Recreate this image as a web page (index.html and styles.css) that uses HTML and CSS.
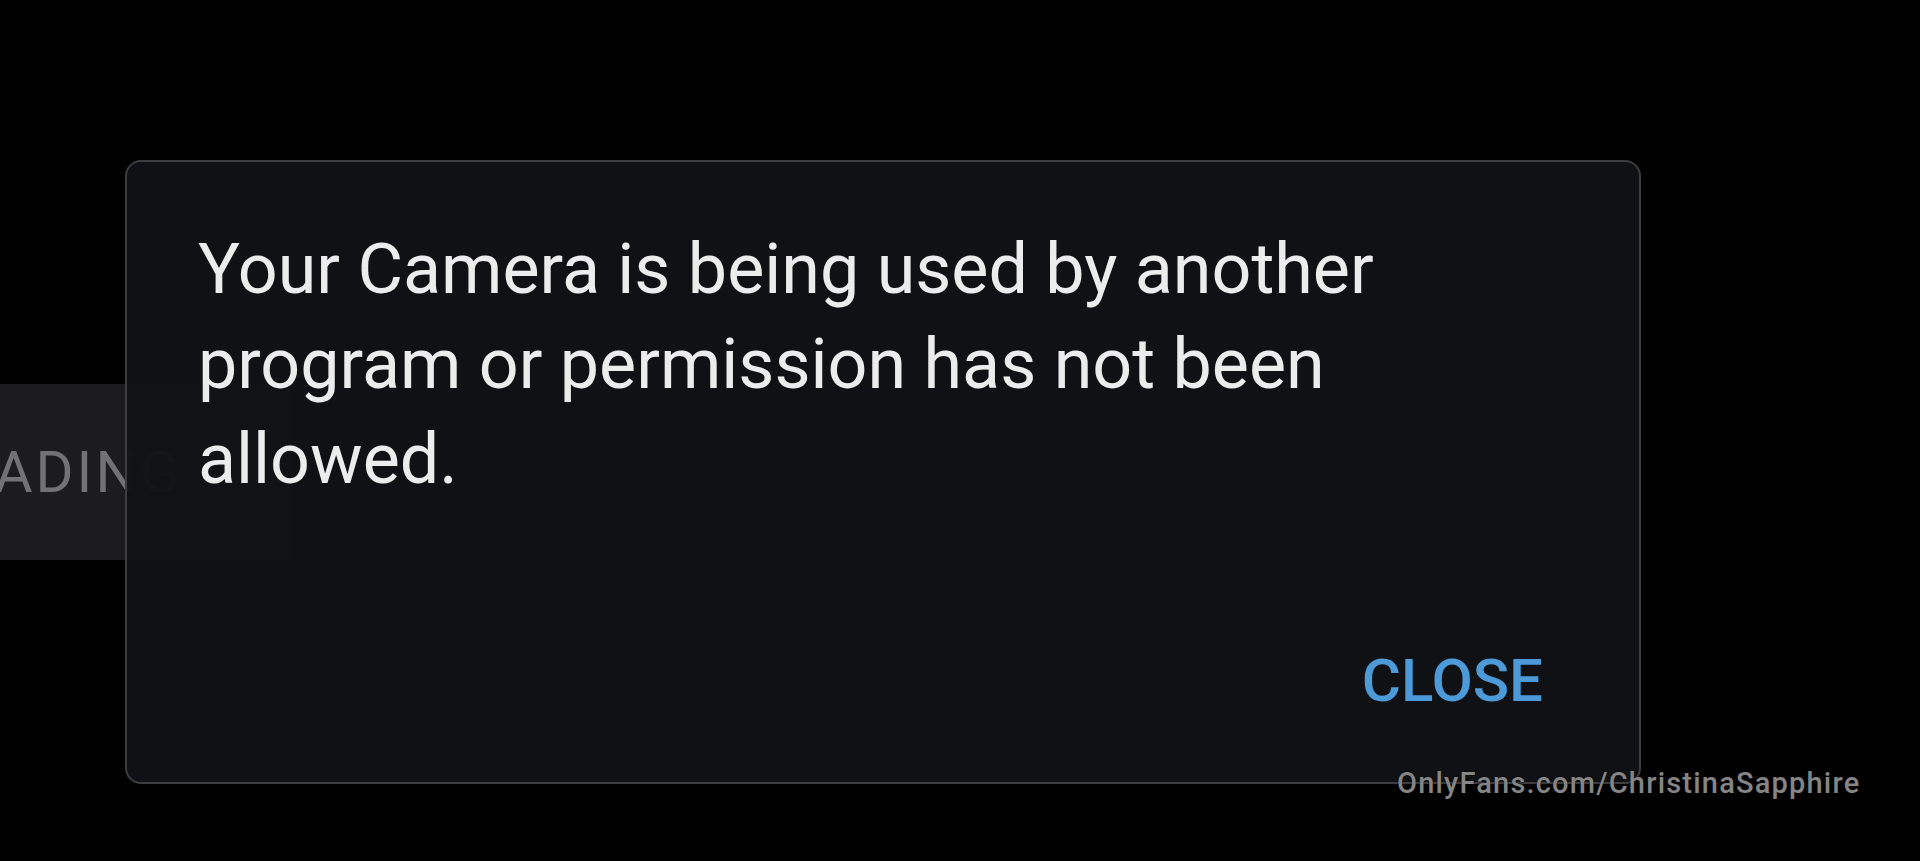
FILE: index.html
```html
<!DOCTYPE html>
<html lang="en">
<head>
    <meta charset="UTF-8">
    <meta name="viewport" content="width=device-width, initial-scale=1.0">
    <title>Camera</title>
    <link rel="stylesheet" href="styles.css">
</head>
<body>
    <!-- Player behind the dialog -->
    <div class="loading">
        <span class="loading-text">LOADING</span>
    </div>

    <!-- Error dialog -->
    <div class="dialog">
        <p class="dialog-message">Your Camera is being used by another program or permission has not been allowed.</p>
        <div class="dialog-actions">
            <button class="dialog-button">CLOSE</button>
        </div>
    </div>

    <span class="watermark">OnlyFans.com/ChristinaSapphire</span>
</body>
</html>
```

FILE: styles.css
```css
/* Global Styles */
* {
    margin: 0;
    padding: 0;
    box-sizing: border-box;
    font-family: Roboto, "Liberation Sans", Arial, sans-serif;
}

html, body {
    height: 100%;
}

body {
    background-color: #000;
    color: #ececec;
    overflow: hidden;
    padding-top: 384px;
}

/* Loading box */
.loading {
    width: 290px;
    height: 176px;
    background-color: #1c1c1e;
    display: flex;
    align-items: center;
    overflow: hidden;
    white-space: nowrap;
}

.loading-text {
    margin-left: -80px;
    font-size: 58px;
    font-weight: 400;
    letter-spacing: 3px;
    color: #727274;
}

/* Dialog */
.dialog {
    position: absolute;
    left: 125px;
    top: 160px;
    width: 1516px;
    height: 624px;
    display: flex;
    flex-direction: column;
    padding: 60px 96px 66px 71px;
    background-color: rgba(17, 18, 21, 0.965);
    border: 2px solid #3d3d40;
    border-radius: 16px;
}

.dialog-message {
    font-size: 70px;
    line-height: 95px;
    font-weight: 400;
    color: #ececec;
}

.dialog-actions {
    margin-top: auto;
    display: flex;
    justify-content: flex-end;
}

.dialog-button {
    background: none;
    border: none;
    padding: 0;
    font-size: 60px;
    line-height: 70px;
    font-weight: 500;
    color: #4c9bd8;
    cursor: pointer;
}

/* Watermark */
.watermark {
    position: absolute;
    left: 1397px;
    top: 769px;
    font-size: 29px;
    line-height: 28px;
    font-weight: 500;
    letter-spacing: 1.2px;
    color: #858585;
    text-shadow: 0 0 2px #000;
    white-space: nowrap;
}
```
